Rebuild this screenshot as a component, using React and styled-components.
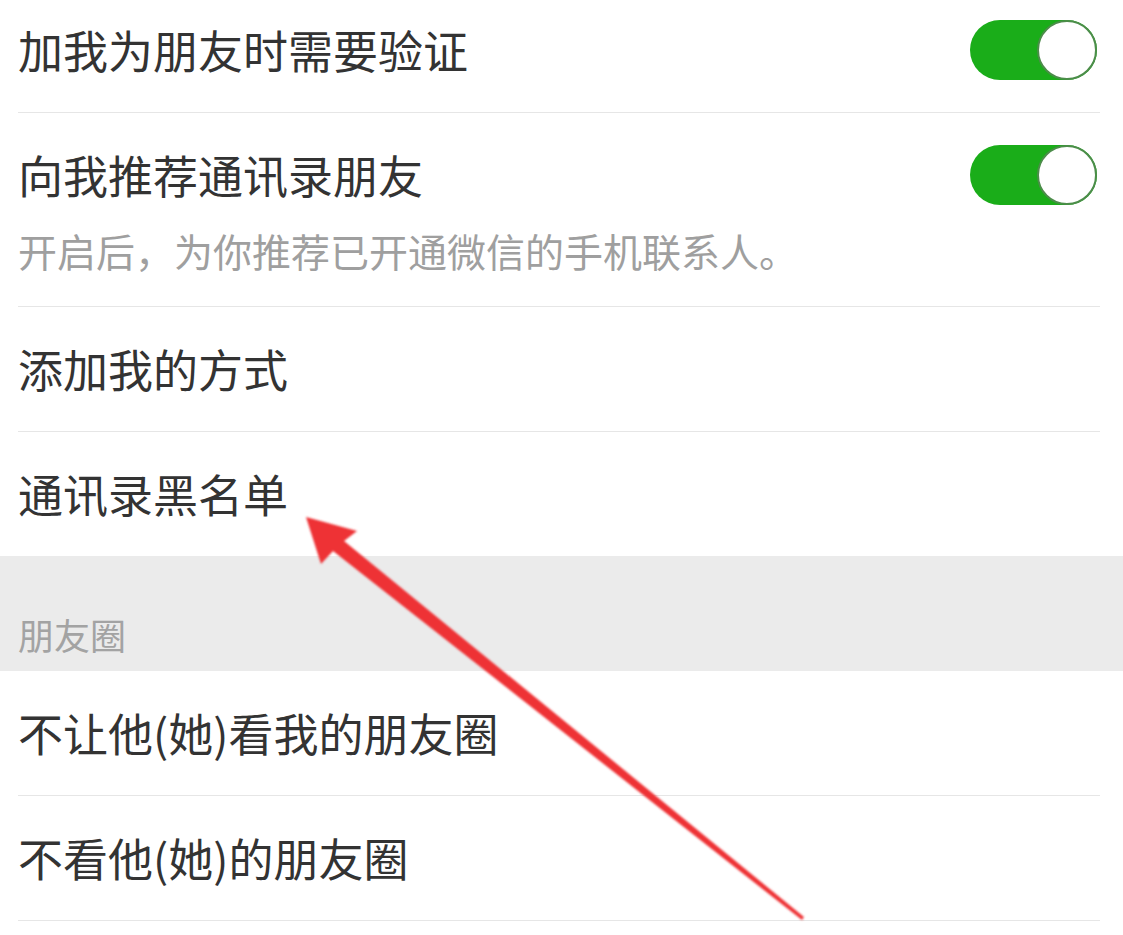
import React from 'react'
import styled, { createGlobalStyle } from 'styled-components'

const GlobalStyle = createGlobalStyle`
	html, body {
		margin: 0;
		background: #ffffff;
	}
	body {
		font-family: "Noto Sans CJK SC", "Noto Sans", sans-serif;
		color: #333333;
	}
`

const topGroup = [
	{ title: '加我为朋友时需要验证', on: true, top: 20 },
	{ title: '向我推荐通讯录朋友', on: true, note: '开启后，为你推荐已开通微信的手机联系人。' },
	{ title: '添加我的方式' },
	{ title: '通讯录黑名单' },
]

const momentsGroup = [
	{ title: '不让他(她)看我的朋友圈' },
	{ title: '不看他(她)的朋友圈' },
]

export default function App() {
	return (
		<Page>
			<GlobalStyle />
			<Group>
				{topGroup.map((item, i) => (
					<Cell key={item.title} $top={item.top} $last={i === topGroup.length - 1}>
						<CellHead>
							<Title>{item.title}</Title>
							{item.on && <Switch />}
						</CellHead>
						{item.note && <Note>{item.note}</Note>}
					</Cell>
				))}
			</Group>

			<SectionHeader>朋友圈</SectionHeader>

			<Group>
				{momentsGroup.map((item) => (
					<Cell key={item.title}>
						<CellHead>
							<Title>{item.title}</Title>
						</CellHead>
					</Cell>
				))}
			</Group>

			{/* red annotation arrow pointing at the blacklist row */}
			<Arrow viewBox="0 0 1123 935">
				<defs>
					<filter id="soft" x="-5%" y="-5%" width="110%" height="110%">
						<feGaussianBlur stdDeviation="0.8" />
					</filter>
				</defs>
				<polygon
					filter="url(#soft)"
					fill="#ee3236"
					points="306,517 357,531 344,541 804,917 802,920 333,551 321,564"
				/>
			</Arrow>
		</Page>
	)
}

const Page = styled.div`
	position: relative;
	width: 1123px;
	height: 935px;
	overflow: hidden;
	background: #ffffff;
`

const Group = styled.div`
	display: flex;
	flex-direction: column;
	padding: 0 23px 0 18px;
	background: #ffffff;
`

const Cell = styled.div`
	display: flex;
	flex-direction: column;
	padding: ${(p) => (p.$top ?? 32)}px 0 32px;
	border-bottom: ${(p) => (p.$last ? 'none' : '1px solid #e6e6e6')};
`

const CellHead = styled.div`
	display: flex;
	align-items: center;
	justify-content: space-between;
	min-height: 60px;
`

const Title = styled.span`
	font-size: 45px;
	line-height: 54px;
	color: #333333;
`

const Note = styled.div`
	margin-top: 22px;
	font-size: 39px;
	line-height: 47px;
	color: #9f9f9f;
`

const Switch = styled.div`
	position: relative;
	width: 127px;
	height: 60px;
	margin-right: 3px;
	border-radius: 30px;
	background: #1aad19;
	flex-shrink: 0;

	&::after {
		content: '';
		position: absolute;
		top: 0;
		right: 0;
		width: 56px;
		height: 56px;
		border-radius: 50%;
		background: #ffffff;
		border: 2px solid #4c8d4a;
	}
`

const SectionHeader = styled.div`
	padding: 57px 18px 15px;
	background: #ebebeb;
	font-size: 36px;
	line-height: 43px;
	color: #a3a3a3;
`

const Arrow = styled.svg`
	position: absolute;
	left: 0;
	top: 0;
	width: 1123px;
	height: 935px;
	pointer-events: none;
`
